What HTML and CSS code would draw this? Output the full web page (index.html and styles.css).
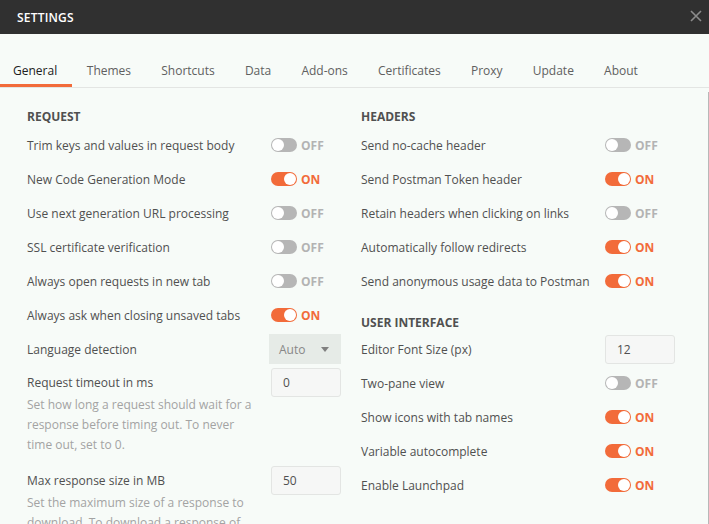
FILE: index.html
```html
<!DOCTYPE html>
<html>
<head>
<meta charset="utf-8">
<link rel="stylesheet" href="styles.css">
</head>
<body>
<div class="window">
  <header class="titlebar">
    <span class="title">SETTINGS</span>
    <svg class="close" width="12" height="12" viewBox="0 0 12 12"><path d="M1 1 L11 11 M11 1 L1 11" stroke="#8c8c8c" stroke-width="1.6" fill="none"/></svg>
  </header>
  <nav class="tabs">
    <span class="tab active">General</span>
    <span class="tab">Themes</span>
    <span class="tab">Shortcuts</span>
    <span class="tab">Data</span>
    <span class="tab">Add-ons</span>
    <span class="tab">Certificates</span>
    <span class="tab">Proxy</span>
    <span class="tab">Update</span>
    <span class="tab">About</span>
  </nav>
  <main class="content">
    <section class="col">
      <h2 class="heading">REQUEST</h2>
      <div class="row"><span class="label">Trim keys and values in request body</span><span class="ctrl"><span class="toggle off"></span><span class="state off">OFF</span></span></div>
      <div class="row"><span class="label">New Code Generation Mode</span><span class="ctrl"><span class="toggle on"></span><span class="state on">ON</span></span></div>
      <div class="row"><span class="label">Use next generation URL processing</span><span class="ctrl"><span class="toggle off"></span><span class="state off">OFF</span></span></div>
      <div class="row"><span class="label">SSL certificate verification</span><span class="ctrl"><span class="toggle off"></span><span class="state off">OFF</span></span></div>
      <div class="row"><span class="label">Always open requests in new tab</span><span class="ctrl"><span class="toggle off"></span><span class="state off">OFF</span></span></div>
      <div class="row"><span class="label">Always ask when closing unsaved tabs</span><span class="ctrl"><span class="toggle on"></span><span class="state on">ON</span></span></div>
      <div class="row"><span class="label">Language detection</span><span class="ctrl"><span class="select">Auto<span class="caret"></span></span></span></div>
      <div class="long">
        <div class="long-text">
          <div class="long-label">Request timeout in ms</div>
          <div class="desc">Set how long a request should wait for a response before timing out. To never time out, set to 0.</div>
        </div>
        <span class="input">0</span>
      </div>
      <div class="long">
        <div class="long-text">
          <div class="long-label">Max response size in MB</div>
          <div class="desc">Set the maximum size of a response to download. To download a response of any size, set to 0.</div>
        </div>
        <span class="input">50</span>
      </div>
    </section>
    <section class="col">
      <h2 class="heading">HEADERS</h2>
      <div class="row"><span class="label">Send no-cache header</span><span class="ctrl"><span class="toggle off"></span><span class="state off">OFF</span></span></div>
      <div class="row"><span class="label">Send Postman Token header</span><span class="ctrl"><span class="toggle on"></span><span class="state on">ON</span></span></div>
      <div class="row"><span class="label">Retain headers when clicking on links</span><span class="ctrl"><span class="toggle off"></span><span class="state off">OFF</span></span></div>
      <div class="row"><span class="label">Automatically follow redirects</span><span class="ctrl"><span class="toggle on"></span><span class="state on">ON</span></span></div>
      <div class="row"><span class="label">Send anonymous usage data to Postman</span><span class="ctrl"><span class="toggle on"></span><span class="state on">ON</span></span></div>
      <h2 class="heading heading-next">USER INTERFACE</h2>
      <div class="row"><span class="label">Editor Font Size (px)</span><span class="ctrl"><span class="input">12</span></span></div>
      <div class="row"><span class="label">Two-pane view</span><span class="ctrl"><span class="toggle off"></span><span class="state off">OFF</span></span></div>
      <div class="row"><span class="label">Show icons with tab names</span><span class="ctrl"><span class="toggle on"></span><span class="state on">ON</span></span></div>
      <div class="row"><span class="label">Variable autocomplete</span><span class="ctrl"><span class="toggle on"></span><span class="state on">ON</span></span></div>
      <div class="row"><span class="label">Enable Launchpad</span><span class="ctrl"><span class="toggle on"></span><span class="state on">ON</span></span></div>
    </section>
  </main>
</div>
</body>
</html>
```
FILE: styles.css
```css
* { box-sizing: border-box; }
html, body { margin: 0; padding: 0; height: 100%; overflow: hidden; }
body {
  background: #f7fbf8;
  font-family: "Open Sans", "Liberation Sans", sans-serif;
  font-size: 12px;
  color: #505050;
}
.window { height: 524px; overflow: hidden; }
.titlebar {
  height: 34px;
  background: #303030;
  display: flex;
  align-items: center;
  justify-content: space-between;
  padding: 0 7px 0 17px;
}
.title {
  color: #ffffff;
  font-weight: 600;
  font-size: 12px;
  letter-spacing: 0.2px;
}
.close { display: block; margin-top: -3px; }
.tabs {
  display: flex;
  margin-top: 22px;
  height: 32px;
  border-bottom: 1px solid #e3e5e3;
}
.tab {
  padding: 1px 15.1px 0;
  line-height: 27px;
  font-size: 12px;
  color: #606060;
  border-bottom: 3px solid transparent;
}
.tab:first-child { padding-left: 13px; padding-right: 14.5px; }
.tab.active { color: #202020; border-bottom-color: #f26b3a; }
.content {
  display: grid;
  grid-template-columns: 314px 314px;
  column-gap: 20px;
  padding: 15px 0 0 27px;
  margin-top: 4px;
  border-right: 1px solid #b8b8b8;
  height: 440px;
}
.heading {
  margin: 0 0 1px 0;
  line-height: 20px;
  font-size: 12px;
  font-weight: 700;
  color: #505050;
}
.heading-next { margin-top: 15px; margin-bottom: -1px; }
.row {
  display: flex;
  align-items: center;
  justify-content: space-between;
  height: 34px;
}
.label { color: #505050; }
.ctrl {
  width: 70px;
  display: flex;
  align-items: center;
}
.toggle {
  position: relative;
  width: 26px;
  height: 14px;
  border-radius: 7px;
  flex: none;
}
.toggle::after {
  content: "";
  position: absolute;
  top: 1px;
  width: 12px;
  height: 12px;
  border-radius: 50%;
  background: #ffffff;
}
.toggle.on { background: #f26b3a; }
.toggle.on::after { right: 1px; }
.toggle.off { background: #b6b6b6; }
.toggle.off::after { left: 1px; }
.state {
  margin-left: 4px;
  font-weight: 700;
  font-size: 12px;
}
.state.on { color: #f26b3a; }
.state.off { color: #b3b3b3; }
.select {
  display: flex;
  align-items: center;
  justify-content: space-between;
  width: 72px;
  height: 30px;
  margin-left: -2px;
  padding: 0 12px 0 10px;
  background: #e6ebe7;
  color: #888888;
}
.caret {
  width: 0;
  height: 0;
  border-left: 4px solid transparent;
  border-right: 4px solid transparent;
  border-top: 5px solid #808080;
}
.input {
  display: block;
  width: 70px;
  height: 29px;
  line-height: 27px;
  padding: 0 11px;
  border: 1px solid #e3e5e3;
  border-radius: 3px;
  background: #f6f7f6;
  color: #505050;
  flex: none;
}
.long {
  display: flex;
  justify-content: space-between;
  align-items: flex-start;
  padding-top: 2px;
  margin-bottom: 9px;
}
.long-text { flex: 1; padding-right: 12px; }
.long-label { line-height: 24px; margin-top: 3px; color: #505050; }
.desc { line-height: 20px; color: #a3a3a3; }
```
